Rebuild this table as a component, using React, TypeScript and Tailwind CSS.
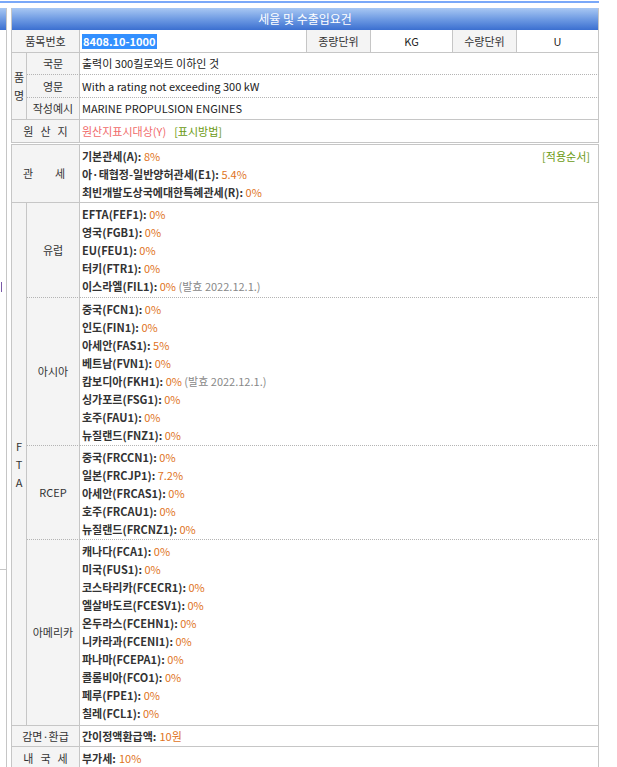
import React from "react";

type FtaRow = { name: string; rate: string; note?: string };
type FtaGroup = { region: string; rows: FtaRow[]; pad: string };

const ftaGroups: FtaGroup[] = [
  {
    region: "유럽",
    pad: "pt-[2px] pb-[2px]",
    rows: [
      { name: "EFTA(FEF1)", rate: "0%" },
      { name: "영국(FGB1)", rate: "0%" },
      { name: "EU(FEU1)", rate: "0%" },
      { name: "터키(FTR1)", rate: "0%" },
      { name: "이스라엘(FIL1)", rate: "0%", note: "(발효 2022.12.1.)" },
    ],
  },
  {
    region: "아시아",
    pad: "pt-[2px] pb-px",
    rows: [
      { name: "중국(FCN1)", rate: "0%" },
      { name: "인도(FIN1)", rate: "0%" },
      { name: "아세안(FAS1)", rate: "5%" },
      { name: "베트남(FVN1)", rate: "0%" },
      { name: "캄보디아(FKH1)", rate: "0%", note: "(발효 2022.12.1.)" },
      { name: "싱가포르(FSG1)", rate: "0%" },
      { name: "호주(FAU1)", rate: "0%" },
      { name: "뉴질랜드(FNZ1)", rate: "0%" },
    ],
  },
  {
    region: "RCEP",
    pad: "pt-[2px] pb-px",
    rows: [
      { name: "중국(FRCCN1)", rate: "0%" },
      { name: "일본(FRCJP1)", rate: "7.2%" },
      { name: "아세안(FRCAS1)", rate: "0%" },
      { name: "호주(FRCAU1)", rate: "0%" },
      { name: "뉴질랜드(FRCNZ1)", rate: "0%" },
    ],
  },
  {
    region: "아메리카",
    pad: "pt-[2px] pb-[3px]",
    rows: [
      { name: "캐나다(FCA1)", rate: "0%" },
      { name: "미국(FUS1)", rate: "0%" },
      { name: "코스타리카(FCECR1)", rate: "0%" },
      { name: "엘살바도르(FCESV1)", rate: "0%" },
      { name: "온두라스(FCEHN1)", rate: "0%" },
      { name: "니카라과(FCENI1)", rate: "0%" },
      { name: "파나마(FCEPA1)", rate: "0%" },
      { name: "콜롬비아(FCO1)", rate: "0%" },
      { name: "페루(FPE1)", rate: "0%" },
      { name: "칠레(FCL1)", rate: "0%" },
    ],
  },
];

// base cell styles, no display/justify so they can be combined freely
const lbox = "border-r border-b border-[#c6c6c6] bg-[#f4f4f4] text-[#333]";
const vbox = "border-r border-b border-[#c6c6c6] bg-white text-[#222]";
const label = `${lbox} flex items-center justify-center`;
const cell = `${vbox} flex items-center`;
const dotted = "[border-bottom-style:dotted] border-b-[#b4b4b4]";

function Rate({ name, rate, note }: FtaRow) {
  return (
    <div className="h-[18px] whitespace-nowrap leading-[18px]">
      <span className="font-bold text-[#333]">{name}:</span>{" "}
      <span className="text-[#e0731c]">{rate}</span>
      {note ? <span className="text-[#888]"> {note}</span> : null}
    </div>
  );
}

function Spread({ text }: { text: string }) {
  return (
    <div className="flex gap-[7px]">
      {text.split("").map((ch, i) => (
        <span key={i}>{ch}</span>
      ))}
    </div>
  );
}

export default function App() {
  return (
    <div className="relative min-h-[767px] overflow-hidden bg-white font-['Noto_Sans_CJK_KR',sans-serif] text-[11px]">
      <div className="mt-px h-[2px] w-[599px] bg-[#7aa8f8]" />

      {/* page behind the popup */}
      <div className="absolute left-0 top-[8px] h-[760px] w-[7px] border-r border-[#c6c6c6]">
        <div className="h-[22px] bg-gradient-to-b from-[#a9c8f3] to-[#3b6fd0]" />
      </div>
      <div className="absolute left-[1px] top-[282px] h-[10px] w-px bg-[#7a5aa8]" />
      <div className="absolute left-0 top-[569px] h-px w-[6px] bg-[#c6c6c6]" />

      <div className="ml-[11px] mt-[5px] w-[588px]">
        <div className="flex h-[22px] items-center justify-center border-x border-[#c6c6c6] bg-gradient-to-b from-[#a9c8f3] via-[#6f9be3] to-[#3b6fd0] text-[12px] text-white">
          세율 및 수출입요건
        </div>

        <div className="grid grid-cols-[15px_53px_227px_64px_82px_64px_82px] border-l border-[#c6c6c6]">
          <div className={`${label} col-span-2 h-[23px]`}>품목번호</div>
          <div className={`${cell} pl-[2px]`}>
            <span className="bg-[#3390ff] px-px font-bold leading-[15px] text-white">8408.10-1000</span>
          </div>
          <div className={label}>종량단위</div>
          <div className={`${vbox} flex items-center justify-center`}>KG</div>
          <div className={label}>수량단위</div>
          <div className={`${vbox} flex items-center justify-center`}>U</div>

          <div className={`${lbox} row-span-3 flex flex-col items-center justify-center leading-[18px]`}>
            <span>품</span>
            <span>명</span>
          </div>
          <div className={`${label} ${dotted} h-[22px]`}>국문</div>
          <div className={`${cell} ${dotted} col-span-5 pl-[2px]`}>출력이 300킬로와트 이하인 것</div>
          <div className={`${label} ${dotted} h-[23px]`}>영문</div>
          <div className={`${cell} ${dotted} col-span-5 pl-[2px]`}>With a rating not exceeding 300 kW</div>
          <div className={`${label} h-[22px]`}>작성예시</div>
          <div className={`${cell} col-span-5 pl-[2px]`}>MARINE PROPULSION ENGINES</div>

          <div className={`${label} col-span-2 h-[23px]`}>
            <Spread text="원산지" />
          </div>
          <div className={`${cell} col-span-5 gap-[8px] pl-[2px]`}>
            <span className="text-[#f06a6a]">원산지표시대상(Y)</span>
            <span className="text-[#6b9a12]">[표시방법]</span>
          </div>
        </div>

        <div className="mt-px grid grid-cols-[15px_53px_519px] border-l border-t border-[#c6c6c6]">
          <div className={`${lbox} col-span-2 flex items-center justify-between pl-[11px] pr-[14px]`}>
            <span>관</span>
            <span>세</span>
          </div>
          <div className={`${vbox} flex items-start justify-between pb-px pl-[2px] pr-[8px] pt-[2px]`}>
            <div>
              <Rate name="기본관세(A)" rate="8%" />
              <Rate name="아·태협정-일반양허관세(E1)" rate="5.4%" />
              <Rate name="최빈개발도상국에대한특혜관세(R)" rate="0%" />
            </div>
            <span className="leading-[18px] text-[#6b9a12]">[적용순서]</span>
          </div>

          <div className={`${lbox} row-span-4 flex flex-col items-center justify-center leading-[18px]`}>
            <span>F</span>
            <span>T</span>
            <span>A</span>
          </div>
          {ftaGroups.map((group, gi) => {
            const last = gi === ftaGroups.length - 1;
            return (
              <React.Fragment key={group.region}>
                <div className={`${label} ${last ? "" : dotted}`}>{group.region}</div>
                <div className={`${vbox} ${last ? "" : dotted} ${group.pad} pl-[2px]`}>
                  {group.rows.map((row) => (
                    <Rate key={row.name} {...row} />
                  ))}
                </div>
              </React.Fragment>
            );
          })}

          <div className={`${label} col-span-2 h-[21px]`}>감면·환급</div>
          <div className={`${cell} pl-[2px]`}>
            <span className="font-bold text-[#333]">간이정액환급액:</span>
            <span className="ml-[3px] text-[#e0731c]">10원</span>
          </div>

          <div className={`${label} col-span-2 h-[23px]`}>
            <Spread text="내국세" />
          </div>
          <div className={`${cell} pl-[2px]`}>
            <span className="font-bold text-[#333]">부가세:</span>
            <span className="ml-[3px] text-[#e0731c]">10%</span>
          </div>
        </div>
      </div>
    </div>
  );
}
